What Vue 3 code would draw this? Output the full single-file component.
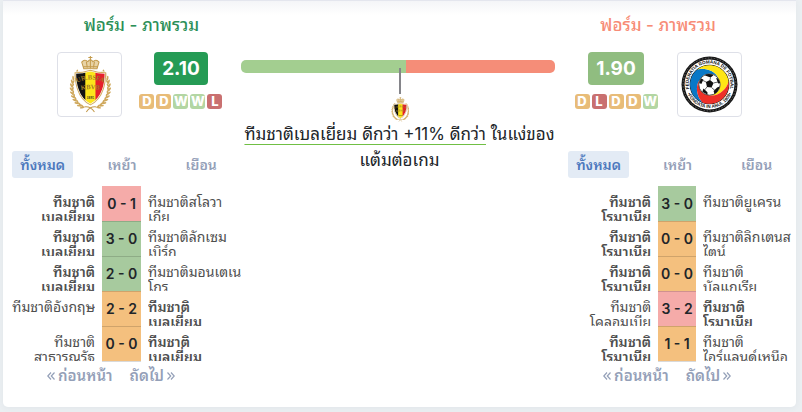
<script setup>
import { ref, h } from 'vue'

const tabs = ['ทั้งหมด', 'เหย้า', 'เยือน']

const belgium = 'ทีมชาติ\nเบลเยี่ยม'
const romania = 'ทีมชาติ\nโรมาเนีย'

const teams = ref([
  {
    id: 'home',
    title: 'ฟอร์ม - ภาพรวม',
    rating: '2.10',
    form: ['D', 'D', 'W', 'W', 'L'],
    own: belgium,
    tab: 0,
    matches: [
      { home: belgium, score: '0 - 1', away: 'ทีมชาติสโลวา\nเกีย', result: 'lose' },
      { home: belgium, score: '3 - 0', away: 'ทีมชาติลักเซม\nเบิร์ก', result: 'win' },
      { home: belgium, score: '2 - 0', away: 'ทีมชาติมอนเตเน\nโกร', result: 'win' },
      { home: 'ทีมชาติอังกฤษ', score: '2 - 2', away: belgium, result: 'draw' },
      { home: 'ทีมชาติ\nสาธารณรัฐ', score: '0 - 0', away: belgium, result: 'draw' }
    ]
  },
  {
    id: 'away',
    title: 'ฟอร์ม - ภาพรวม',
    rating: '1.90',
    form: ['D', 'L', 'D', 'D', 'W'],
    own: romania,
    tab: 0,
    matches: [
      { home: romania, score: '3 - 0', away: 'ทีมชาติยูเครน', result: 'win' },
      { home: romania, score: '0 - 0', away: 'ทีมชาติลิกเตนส\nไตน์', result: 'draw' },
      { home: romania, score: '0 - 0', away: 'ทีมชาติ\nบัลแกเรีย', result: 'draw' },
      { home: 'ทีมชาติ\nโคลอมเบีย', score: '3 - 2', away: romania, result: 'lose' },
      { home: romania, score: '1 - 1', away: 'ทีมชาติ\nไอร์แลนด์เหนือ', result: 'draw' }
    ]
  }
])

// one half of the laurel wreath, leaf pairs along an ellipse
const wreathHalf = () => {
  const leaves = []
  for (let a = 112; a <= 222; a += 10) {
    const rad = (a * Math.PI) / 180
    const x = 42 + 36 * Math.cos(rad)
    const y = 62 + 42 * Math.sin(rad)
    leaves.push(
      h('ellipse', { cx: x, cy: y - 3, rx: 1.8, ry: 4.5, transform: `rotate(${a - 210} ${x} ${y})` }),
      h('ellipse', { cx: x, cy: y - 3, rx: 1.8, ry: 4.5, transform: `rotate(${a - 155} ${x} ${y})` })
    )
  }
  return leaves
}

// Belgian crest: crown, wreath and tricolour shield
const BelgiumCrest = () =>
  h('svg', { viewBox: '0 0 84 112', role: 'img', 'aria-label': 'เบลเยี่ยม' }, [
    h('g', { fill: '#cfa85c' }, wreathHalf()),
    h('g', { fill: '#cfa85c', transform: 'translate(84 0) scale(-1 1)' }, wreathHalf()),
    h('path', { d: 'M30 100Q42 98 50 110M54 100Q42 98 34 110', fill: 'none', stroke: '#c39a4b', 'stroke-width': 2 }),
    h('path', { d: 'M29 25L25 12Q31 5 37 11Q42 4 47 11Q53 5 59 12L55 25Z', fill: '#e8d3a6', stroke: '#c39a4b', 'stroke-width': 2 }),
    h('path', { d: 'M42 0V24M38 3H46M34 11L36 23M50 11L48 23M28 21H56', fill: 'none', stroke: '#c39a4b', 'stroke-width': 2 }),
    h('path', { d: 'M12 33Q27 33 42 28V96Q24 87 17 66Q12 52 12 33Z', fill: '#111' }),
    h('path', { d: 'M72 33Q57 33 42 28V96Q60 87 67 66Q72 52 72 33Z', fill: '#e6202b' }),
    h('path', { d: 'M32 31L42 28L52 31V91L42 96L32 91Z', fill: '#fce51b' }),
    h('path', { d: 'M12 33Q27 33 42 28Q57 33 72 33Q72 52 67 66Q60 87 42 96Q24 87 17 66Q12 52 12 33Z', fill: 'none', stroke: '#fff', 'stroke-width': 4 }),
    h('path', { d: 'M12 33Q27 33 42 28Q57 33 72 33Q72 52 67 66Q60 87 42 96Q24 87 17 66Q12 52 12 33Z', fill: 'none', stroke: '#d2ac61', 'stroke-width': 2 }),
    h('defs', null, [
      h('path', { id: 'shield-arc', d: 'M10 56Q42 36 74 56' }),
      h('path', { id: 'shield-arc-low', d: 'M12 70Q42 60 72 70' })
    ]),
    h('g', { fill: '#a07a28', 'font-family': 'Liberation Serif, serif', 'font-weight': 700, 'font-size': 13, 'text-anchor': 'middle' }, [
      h('text', null, [h('textPath', { href: '#shield-arc', startOffset: '50%' }, 'UR.BSFA')]),
      h('text', null, [h('textPath', { href: '#shield-arc-low', startOffset: '50%' }, 'KBVB')]),
      h('text', { x: 42, y: 84, 'font-size': 7, fill: '#222' }, '1895')
    ])
  ])

// Romanian crest: ring with lettering, three swirls and a ball
const swirl = 'M43 91.700A38 38 0 0 1 31.600 26.900C45 22 68 28 74.200 45.500A21 21 0 0 0 37.800 45.500C25.800 59.600 32.100 82.500 43 91.700Z'

const RomaniaCrest = () =>
  h('svg', { viewBox: '0 0 112 112', role: 'img', 'aria-label': 'โรมาเนีย' }, [
    h('circle', { cx: 56, cy: 56, r: 55, fill: '#151515' }),
    h('circle', { cx: 56, cy: 56, r: 52, fill: 'none', stroke: '#777', 'stroke-width': 1.5, 'stroke-dasharray': '3 3' }),
    h('circle', { cx: 56, cy: 56, r: 49, fill: '#fff' }),
    h('circle', { cx: 56, cy: 56, r: 38, fill: '#fff', stroke: '#151515', 'stroke-width': 2 }),
    h('path', { d: swirl, fill: '#0878c7' }),
    h('path', { d: swirl, fill: '#ffe514', transform: 'rotate(120 56 56)' }),
    h('path', { d: swirl, fill: '#ee3028', transform: 'rotate(240 56 56)' }),
    h('circle', { cx: 56, cy: 56, r: 21, fill: '#fff', stroke: '#222', 'stroke-width': 1.5 }),
    h('path', { d: 'M49 51L57 47L64 53L60 62L51 61ZM46 38Q55 33 64 38L58 42ZM36 53L39 44L44 46L40 55ZM42 70L44 64L52 71L52 76ZM64 69L71 62L76 60Q74 69 66 75ZM69 43L73 44L77 53L73 54Z', fill: '#111' }),
    h('path', { d: 'M57 47L58 42M49 51L43 48M51 61L46 67M60 62L67 68M64 53L73 51', fill: 'none', stroke: '#333', 'stroke-width': 1.5 }),
    h('defs', null, [
      h('path', { id: 'ring-top', d: 'M18 71A41 41 0 1 1 94 71' }),
      h('path', { id: 'ring-bottom', d: 'M10 65A47 47 0 0 0 102 65' })
    ]),
    h('g', { fill: '#111', 'font-family': 'Liberation Sans, sans-serif', 'font-weight': 700, 'font-size': 9 }, [
      h('text', null, [h('textPath', { href: '#ring-top', startOffset: '50%', 'text-anchor': 'middle' }, 'FEDERATIA ROMANA DE FOTBAL')]),
      h('text', null, [h('textPath', { href: '#ring-bottom', startOffset: '50%', 'text-anchor': 'middle' }, '•FONDATA IN ANUL 1909•')])
    ])
  ])

const crests = { home: BelgiumCrest, away: RomaniaCrest }
</script>

<template>
  <main class="card">
    <section v-for="team in teams" :key="team.id" class="team" :class="team.id">
      <h2 class="title">{{ team.title }}</h2>
      <div class="summary">
        <div class="logo">
          <component :is="crests[team.id]" />
        </div>
        <div class="stats">
          <div class="rating">{{ team.rating }}</div>
          <div class="form">
            <span v-for="(f, i) in team.form" :key="i" class="form-item" :class="f">{{ f }}</span>
          </div>
        </div>
      </div>

      <nav class="tabs">
        <button
          v-for="(tab, i) in tabs"
          :key="tab"
          type="button"
          class="tab"
          :class="{ active: team.tab === i }"
          @click="team.tab = i"
        >
          {{ tab }}
        </button>
      </nav>

      <table class="matches">
        <tbody>
          <tr v-for="(m, i) in team.matches" :key="i">
            <td class="name left">
              <div class="clip" :class="{ own: m.home === team.own }">{{ m.home }}</div>
            </td>
            <td class="score" :class="m.result">{{ m.score }}</td>
            <td class="name">
              <div class="clip" :class="{ own: m.away === team.own }">{{ m.away }}</div>
            </td>
          </tr>
        </tbody>
      </table>

      <div class="pager">
        <button type="button" class="page">
          <svg class="chevron" viewBox="0 0 8 8"><path d="M4 0.500L0.800 4L4 7.500M7.500 0.500L4.300 4L7.500 7.500" /></svg>
          ก่อนหน้า
        </button>
        <button type="button" class="page">
          ถัดไป
          <svg class="chevron" viewBox="0 0 8 8"><path d="M0.500 0.500L3.700 4L0.500 7.500M4 0.500L7.200 4L4 7.500" /></svg>
        </button>
      </div>
    </section>

    <section class="compare">
      <div class="bar">
        <div class="bar-home"></div>
        <div class="bar-away"></div>
        <div class="marker">
          <div class="marker-line"></div>
          <BelgiumCrest class="marker-logo" />
        </div>
      </div>
      <p class="verdict">
        <span class="underline">ทีมชาติเบลเยี่ยม ดีกว่า +11% ดีกว่า</span> ในแง่ของ<br />แต้มต่อเกม
      </p>
    </section>
  </main>
</template>

<style>
body {
  background: #ebeff2;
}
</style>

<style scoped>
.card {
  display: grid;
  grid-template-columns: 3fr 4fr 3fr;
  margin: 0 6px 5px 3px;
  padding-bottom: 20px;
  background: linear-gradient(#f4f5f8, #fff 14px);
  border-top: 1px solid #e4e6ee;
  border-radius: 0 0 5px 5px;
  box-shadow: 0 1px 6px rgba(60, 80, 100, 0.06);
  font-family: Inter, "Noto Sans Thai Looped", Tahoma, Loma, "Noto Sans Thai", sans-serif;
  color: #212529;
}

.team {
  grid-row: 1;
  min-width: 0;
}

.home {
  grid-column: 1;
}

.away {
  grid-column: 3;
  padding-left: 1px;
}

.title {
  margin: 12px 0 15px;
  padding-left: 39px;
  text-align: center;
  font-size: 17px;
  line-height: 24px;
  font-weight: 500;
  color: #2c8f58;
}

.away .title {
  padding-left: 0;
  padding-right: 39px;
  color: #f78c76;
}

.summary {
  display: flex;
  justify-content: center;
  gap: 17px;
  padding-left: 36px;
}

.away .summary {
  flex-direction: row-reverse;
  gap: 19px;
  padding-left: 0;
  padding-right: 39px;
}

.logo {
  display: flex;
  align-items: center;
  justify-content: center;
  box-sizing: border-box;
  width: 65px;
  height: 65px;
  border: 1px solid #dee0e8;
  border-radius: 4px;
}

.logo svg {
  height: 57px;
}

.stats {
  display: flex;
  flex-direction: column;
  align-items: center;
  gap: 9px;
}

.rating {
  padding: 0 8px;
  border-radius: 4px;
  background: #259b55;
  color: #fff;
  font-size: 19px;
  line-height: 33px;
  font-weight: 700;
}

.away .rating {
  background: #90bd80;
}

.form {
  display: flex;
  gap: 2px;
}

.form-item {
  width: 15px;
  border-radius: 3px;
  color: #fff;
  font-size: 13px;
  line-height: 15px;
  font-weight: 800;
  text-align: center;
}

.form-item.D {
  background: #e8bc78;
}

.form-item.W {
  background: #b3d6a3;
}

.form-item.L {
  background: #c97070;
}

.tabs {
  display: grid;
  grid-template-columns: repeat(3, 1fr);
  justify-items: center;
  margin-top: 34px;
}

button {
  padding: 0;
  border: 0;
  background: none;
  color: #94a0b8;
  font-family: inherit;
  cursor: pointer;
}

.tab {
  padding: 0 8px;
  border-radius: 3px;
  font-size: 14px;
  line-height: 27px;
  font-weight: 600;
}

.tab.active {
  background: #e3ebf5;
  color: #4c78bd;
}

.matches {
  width: 100%;
  margin-top: 8px;
  border-collapse: collapse;
  table-layout: fixed;
}

.matches td {
  height: 35px;
  padding: 0 0 0 7px;
  vertical-align: top;
}

.matches .left {
  width: 92px;
  padding: 0 7px 0 0;
  text-align: right;
}

.clip {
  height: 27px;
  padding-top: 8px;
  overflow: hidden;
  color: #4f4f4f;
  font-size: 14px;
  line-height: 15px;
  white-space: pre;
}

.left .clip {
  display: flex;
  justify-content: flex-end;
}

.clip.own {
  font-weight: 600;
}

.matches .score {
  width: 39px;
  height: 34px;
  padding: 0;
  border-bottom: 1px solid rgba(0, 0, 0, 0.15);
  font-size: 14px;
  font-weight: 600;
  text-align: center;
  vertical-align: middle;
}

.away .matches .score {
  width: 38px;
}

.score.lose {
  background: #f5aba9;
}

.score.win {
  background: #a7ca9e;
}

.score.draw {
  background: #f4c07e;
}

.pager {
  display: flex;
  gap: 17px;
  margin-top: 3px;
  padding-left: 44px;
}

.page {
  display: flex;
  align-items: center;
  gap: 3px;
  font-size: 15px;
  line-height: 22px;
  font-weight: 600;
}

.chevron {
  width: 8px;
  height: 8px;
  fill: none;
  stroke: currentColor;
  stroke-width: 1.2;
}

.compare {
  grid-column: 2;
  grid-row: 1;
  padding-top: 59px;
}

.bar {
  position: relative;
  display: flex;
  height: 13px;
  margin-right: 3px;
}

.bar-home {
  flex: 165;
  border-radius: 5px 0 0 5px;
  background: #a3ce90;
}

.bar-away {
  flex: 149;
  border-radius: 0 5px 5px 0;
  background: #f58d78;
}

.marker {
  position: absolute;
  top: 8px;
  left: 50%;
  display: flex;
  flex-direction: column;
  align-items: center;
  gap: 3px;
  width: 20px;
  margin-left: -8px;
}

.marker-line {
  width: 2px;
  height: 26px;
  background: #85858a;
}

.marker-logo {
  height: 25px;
}

.verdict {
  margin: 48px 0 0;
  text-align: center;
  font-size: 17px;
  line-height: 26px;
  white-space: nowrap;
}

.underline {
  text-decoration: underline 1px #70bf44;
  text-decoration-skip-ink: none;
  text-underline-offset: 4px;
}
</style>
